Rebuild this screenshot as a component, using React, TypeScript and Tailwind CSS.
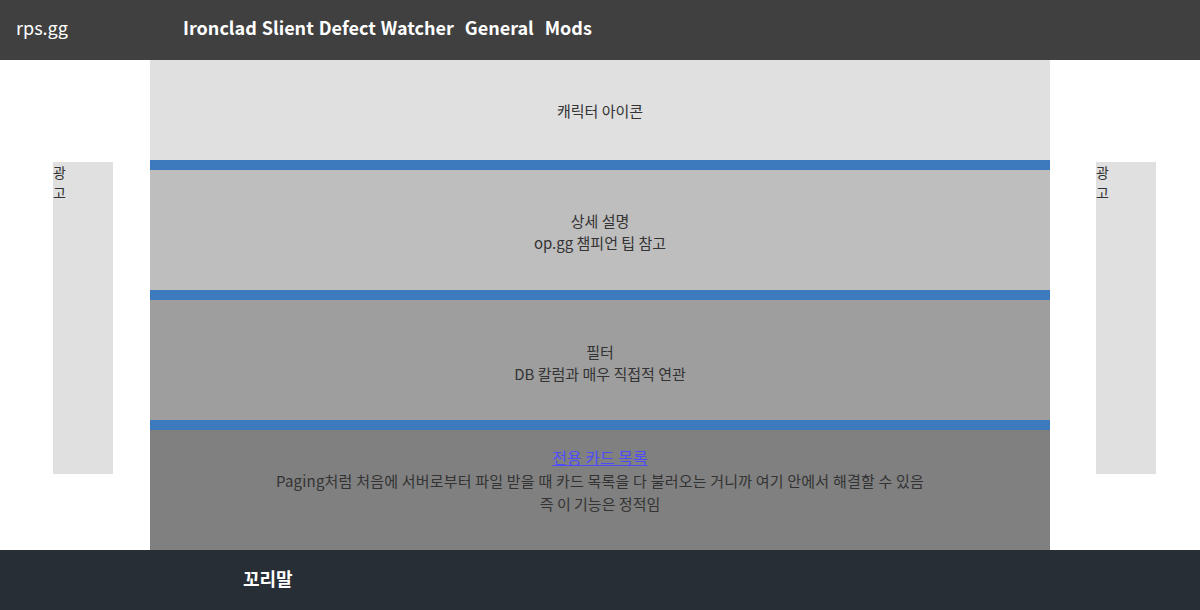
import React from 'react';

const font = { fontFamily: '"Noto Sans CJK KR", "Noto Sans", sans-serif' };

function Ad({ className }: { className: string }) {
  return (
    <div className={`mt-[102px] h-[312px] w-[60px] bg-[#e0e0e0] text-sm leading-5 text-[#333] ${className}`}>
      광<br />고
    </div>
  );
}

export default function App() {
  return (
    <div className="flex min-h-[610px] w-full flex-col bg-white" style={font}>
      <header className="flex h-[60px] items-center bg-[#404040] pb-[6px] text-white">
        <div className="w-[183px] pl-4 text-lg">rps.gg</div>
        <nav className="flex text-lg font-bold">
          <span>Ironclad</span>
          <span className="ml-[5px]">Slient</span>
          <span className="ml-[5px]">Defect</span>
          <span className="ml-[5px]">Watcher</span>
          <span className="ml-[11px]">General</span>
          <span className="ml-[11px]">Mods</span>
        </nav>
      </header>

      <div className="flex h-[490px]">
        <div className="w-[150px]">
          <Ad className="ml-[53px]" />
        </div>

        <main className="flex w-[900px] flex-col text-center text-[15px] leading-[22px] text-[#333]">
          <section className="flex h-[100px] items-center justify-center bg-[#e0e0e0] pt-[2px]">
            캐릭터 아이콘
          </section>
          <div className="h-[10px] bg-[#3d7abd]" />
          <section className="flex h-[120px] flex-col items-center justify-center bg-[#bebebe] pt-[4px]">
            <p>상세 설명</p>
            <p>op.gg 챔피언 팁 참고</p>
          </section>
          <div className="h-[10px] bg-[#3d7abd]" />
          <section className="flex h-[120px] flex-col items-center justify-center bg-[#9e9e9e] pt-[6px]">
            <p>필터</p>
            <p>DB 칼럼과 매우 직접적 연관</p>
          </section>
          <div className="h-[10px] bg-[#3d7abd]" />
          <section className="flex h-[120px] flex-col items-center justify-center bg-[#808080] pb-[20px] leading-[23px]">
            <a href="#" className="text-base text-[#4d4dff] underline">
              전용 카드 목록
            </a>
            <p className="tracking-[0.2px]">
              Paging처럼 처음에 서버로부터 파일 받을 때 카드 목록을 다 불러오는 거니까 여기 안에서 해결할 수 있음
            </p>
            <p>즉 이 기능은 정적임</p>
          </section>
        </main>

        <div className="w-[150px]">
          <Ad className="ml-[46px]" />
        </div>
      </div>

      <footer className="flex h-[60px] items-center bg-[#272e36] pb-[4px] pl-[243px] text-lg font-bold text-white">
        꼬리말
      </footer>
    </div>
  );
}
